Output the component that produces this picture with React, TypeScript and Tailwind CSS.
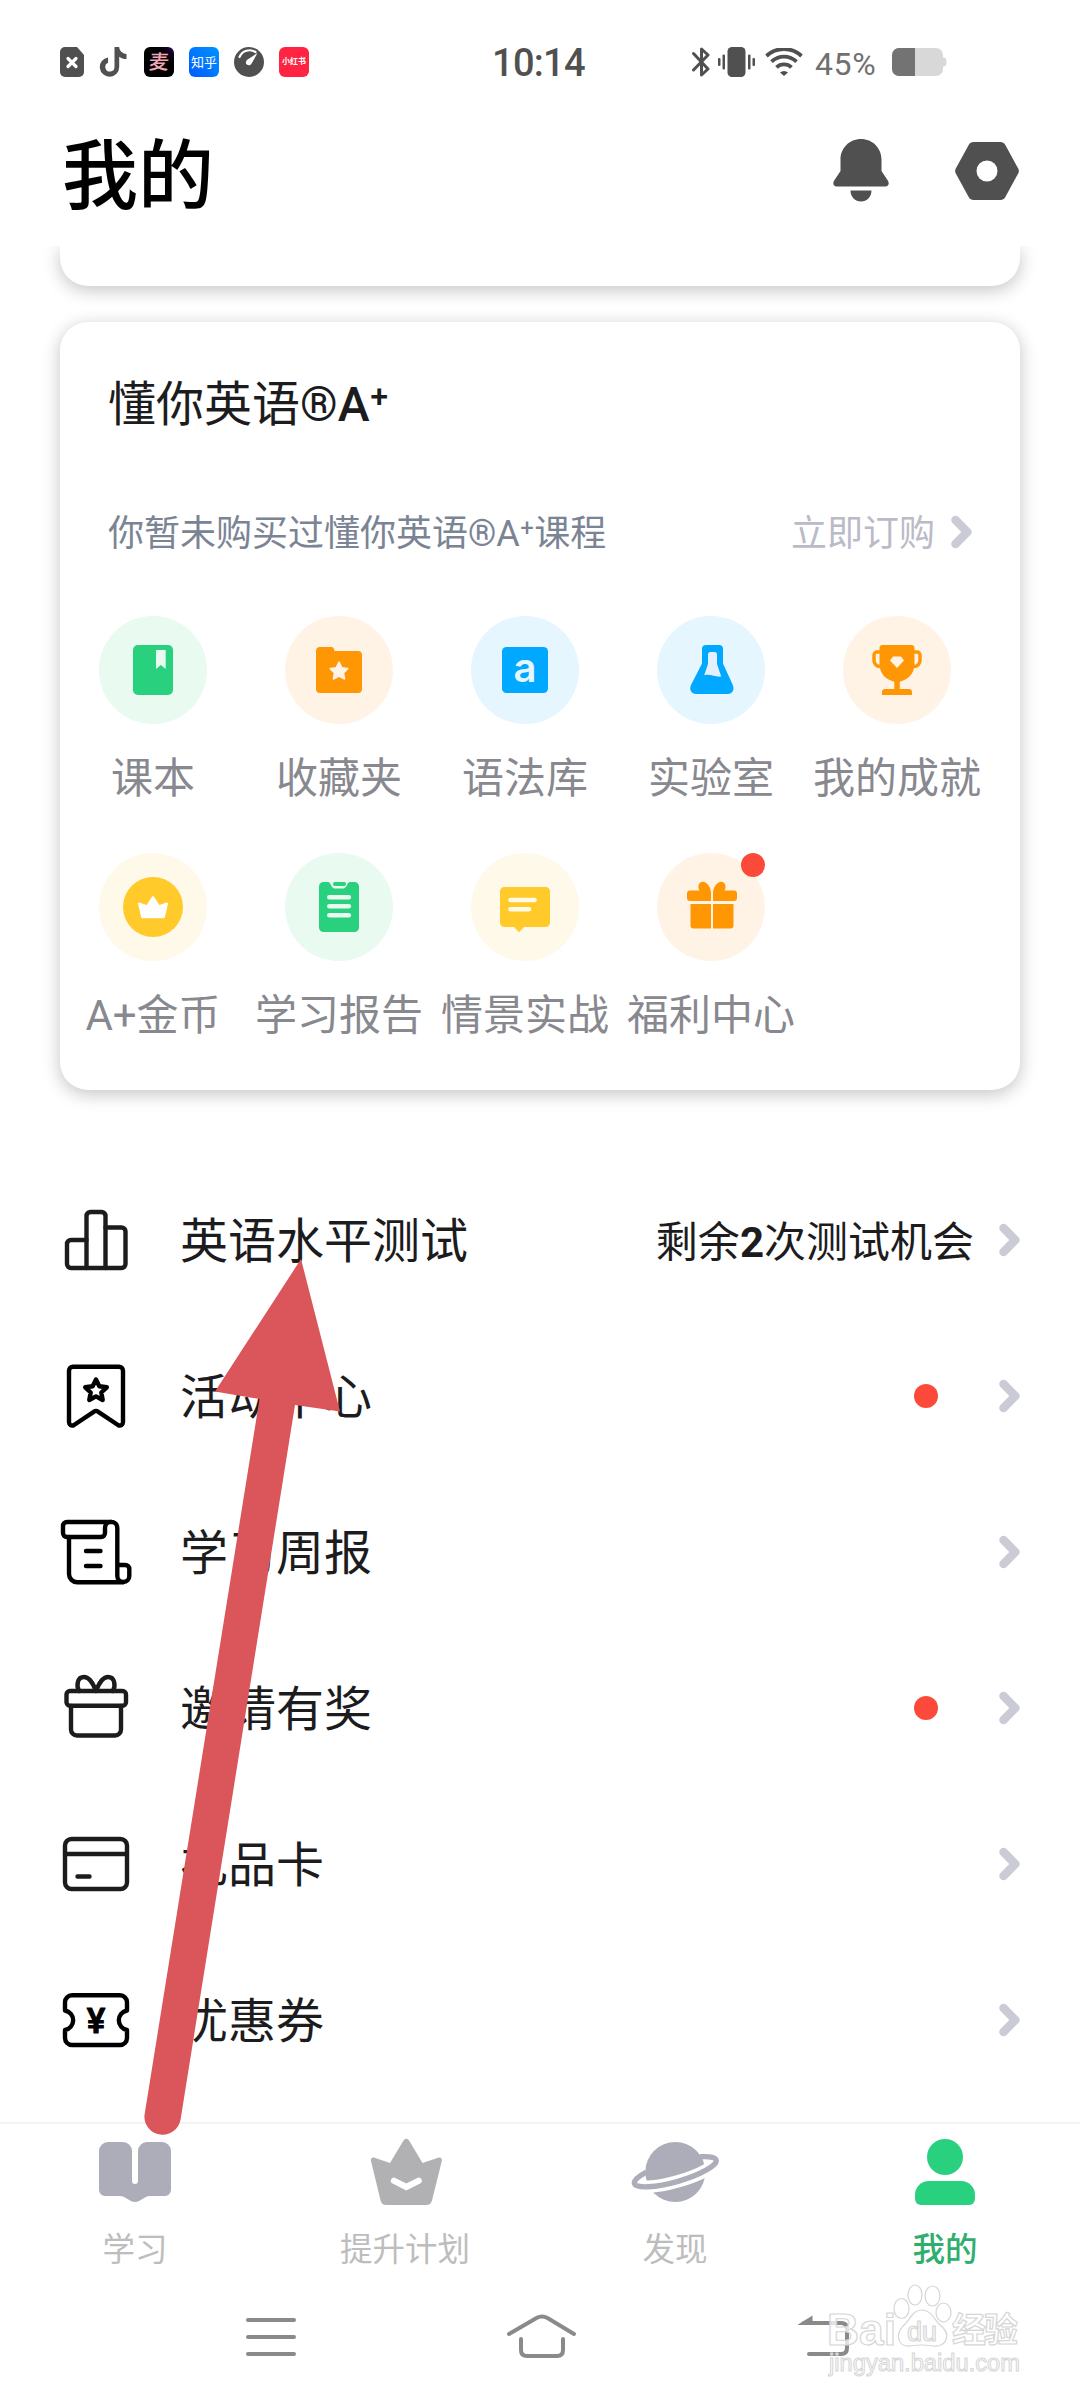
import type { ReactNode } from 'react';
import clsx from 'clsx';

const ARROW_COLOR = '#da565b';

/* ---------- Status bar ---------- */

const StatusBar = () => (
  <div className="h-[124px] shrink-0 flex items-center pl-[60px] text-[#505050]">
    <div className="flex items-center w-[432px] gap-[15px]">
      <svg width="24" height="30" viewBox="0 0 24 30">
        <path d="M5 0h12l7 8v17a5 5 0 0 1-5 5H5a5 5 0 0 1-5-5V5a5 5 0 0 1 5-5z" fill="#505050" />
        <path d="M8 11.5l8 8M16 11.5l-8 8" stroke="#fff" strokeWidth="3.2" strokeLinecap="round" />
      </svg>
      <svg width="30" height="30" viewBox="0 0 30 30">
        <path d="M15.5 0h4.6c.5 3.8 3 6.6 7.4 7v5c-2.800 0-5.200-.8-7.300-2.300V20a9.700 9.700 0 1 1-11.200-9.600v5.300a4.600 4.600 0 1 0 6.500 4.200z" fill="#505050" />
      </svg>
      <div className="w-[30px] h-[30px] rounded-[6px] bg-linear-to-bl from-[#2b0a4d] to-40% to-black flex items-center justify-center overflow-hidden">
        <span className="text-[20px] leading-none font-medium text-[#f0a6b4] -skew-x-6">麦</span>
      </div>
      <div className="w-[30px] h-[30px] rounded-[6px] bg-linear-to-tr from-[#0058ff] to-[#0094ff] flex items-center justify-center">
        <span className="text-[13px] leading-none text-white">知乎</span>
      </div>
      <svg width="30" height="30" viewBox="0 0 30 30">
        <circle cx="15" cy="15" r="15" fill="#505050" />
        <path d="M5.5 10A11 11 0 0 1 21.5 5" stroke="#fff" strokeWidth="2.2" fill="none" strokeLinecap="round" />
        <path d="M23.5 6L13.3 12.8a3 3 0 1 0 4.2 4z" fill="#fff" />
      </svg>
      <div className="w-[30px] h-[30px] rounded-[6px] bg-[#ff2442] flex items-center justify-center">
        <span className="text-[8px] leading-none font-bold text-white whitespace-nowrap">小红书</span>
      </div>
    </div>

    <div className="w-[199px] text-[38px] leading-none font-medium tracking-[-0.7px] pt-[2px]">10:14</div>

    <svg width="20" height="30" viewBox="0 0 20 30" fill="none" stroke="#505050" strokeWidth="3" strokeLinejoin="round" strokeLinecap="round">
      <path d="M2.5 6.5L17 22l-6.500 6V2L17 8 2.5 23" />
    </svg>
    <svg className="ml-[7px]" width="37" height="30" viewBox="0 0 37 30" fill="#505050">
      <rect x="9.5" width="18" height="30" rx="4.5" />
      <rect x="0" y="11" width="2.5" height="8" rx="1" />
      <rect x="4.5" y="7.5" width="2.5" height="15" rx="1" />
      <rect x="30" y="7.5" width="2.5" height="15" rx="1" />
      <rect x="34.5" y="11" width="2.5" height="8" rx="1" />
    </svg>
    <svg className="ml-[10px]" width="38" height="28" viewBox="0 0 38 28" fill="none" stroke="#505050" strokeWidth="3.8">
      <path d="M1.5 8a25.500 25.500 0 0 1 35 0" />
      <path d="M6.5 13.700a18 18 0 0 1 25 0" />
      <path d="M11.5 19.300a11 11 0 0 1 15 0" />
      <path d="M15 24.500a6 6 0 0 1 8 0L19 28z" fill="#505050" stroke="none" />
    </svg>
    <span className="ml-[12px] w-[77px] text-[32px] leading-none tracking-[0.6px] text-[#707070] pt-[3px]">45%</span>
    <svg width="55" height="28" viewBox="0 0 55 28">
      <path d="M7 0h37a7 7 0 0 1 7 7v2.500c2.500 0 3.500 1 3.500 4.500s-1 4.500-3.500 4.500V21a7 7 0 0 1-7 7H7a7 7 0 0 1-7-7V7a7 7 0 0 1 7-7z" fill="#d8d8d8" />
      <path d="M7 0h16v28H7a7 7 0 0 1-7-7V7a7 7 0 0 1 7-7z" fill="#737373" />
    </svg>
  </div>
);

const Header = () => (
  <header className="h-[122px] shrink-0 pl-[62px] pr-[60px] pb-[28px] flex items-center">
    <h1 className="flex-1 text-[76px] leading-none font-medium text-black pt-[11px]">我的</h1>
    <svg width="56" height="64" viewBox="0 0 56 64" fill="#505050">
      <path d="M28 0c11.500 0 20.500 9 20.500 20.500V32l6.300 9.500c2 3 .5 6-2.300 6h-49c-2.800 0-4.300-3-2.300-6L7.500 32V20.500C7.500 9 16.500 0 28 0z" />
      <path d="M17.500 51.500h21c0 6.500-4.700 11-10.500 11s-10.500-4.500-10.500-11z" />
    </svg>
    <svg className="ml-[65px]" width="66" height="60" viewBox="0 0 66 60">
      <path d="M19.500 1h27c2 0 3.700 1 4.700 2.700l13 23.800c.9 1.600.9 3.400 0 5l-13 23.800c-1 1.700-2.700 2.700-4.700 2.700h-27c-2 0-3.700-1-4.700-2.700l-13-23.800c-.9-1.600-.9-3.400 0-5l13-23.800C15.800 2 17.500 1 19.500 1z" fill="#505050" />
      <circle cx="33" cy="30" r="10.500" fill="#fff" />
    </svg>
  </header>
);

/* ---------- Course card ---------- */

interface Feature {
  label: string;
  bg: string;
  icon: ReactNode;
  badge?: boolean;
}

const FEATURES: Feature[] = [
  {
    label: '课本',
    bg: 'bg-[#e9faf1]',
    icon: (
      <>
        <rect x="34" y="29" width="40" height="50" rx="5" fill="#29d17f" />
        <path d="M57 34h9.700v19l-4.850-4L57 53z" fill="#e9faf1" />
      </>
    ),
  },
  {
    label: '收藏夹',
    bg: 'bg-[#fff3e5]',
    icon: (
      <>
        <path d="M35 31h11.500q2 0 2.600 2.300l.4 1.700H73a4 4 0 0 1 4 4v34a4 4 0 0 1-4 4H35a4 4 0 0 1-4-4V35a4 4 0 0 1 4-4z" fill="#ff9704" />
        <path d="M54 46.500l2.600 5.400 5.900.8-4.300 4.100 1.100 5.900-5.300-2.900-5.300 2.900 1.100-5.900-4.300-4.100 5.900-.8z" fill="#fff3e5" stroke="#fff3e5" strokeWidth="2" strokeLinejoin="round" />
      </>
    ),
  },
  {
    label: '语法库',
    bg: 'bg-[#e5f6ff]',
    icon: (
      <>
        <rect x="31" y="31" width="46" height="46" rx="4.500" fill="#00a9ff" />
        <text x="54" y="65.500" textAnchor="middle" fill="#e5f6ff" className="font-['Inter'] text-[40px] font-semibold">a</text>
      </>
    ),
  },
  {
    label: '实验室',
    bg: 'bg-[#e5f6ff]',
    icon: (
      <>
        <path d="M49 29h13a4 4 0 0 1 4 4v14.500l9.800 21.500c2 4.500-.3 9-5 9H39c-4.700 0-7-4.500-5-9L45 47.500V33a4 4 0 0 1 4-4z" fill="#00a9ff" />
        <path d="M53.500 36h4a2.500 2.500 0 0 1 2.500 2.500V48l4.200 12.500c-6 1-10.500-3-17-1.300L51 48v-9.500a2.500 2.500 0 0 1 2.500-2.500z" fill="#e5f0ff" />
      </>
    ),
  },
  {
    label: '我的成就',
    bg: 'bg-[#fff3e5]',
    icon: (
      <>
        <path d="M37 36h-3a3 3 0 0 0-3 3v5.500a6 6 0 0 0 6 6h2M71 36h3a3 3 0 0 1 3 3v5.500a6 6 0 0 1-6 6h-2" fill="none" stroke="#ff9704" strokeWidth="3.5" />
        <path d="M39.500 29h29a3 3 0 0 1 3 3v16c0 10-7 16-14.700 17.700V73H66a3 3 0 0 1 3 3v3H39v-3a3 3 0 0 1 3-3h9.300v-7.300C43.500 64 36.500 58 36.500 48V32a3 3 0 0 1 3-3z" fill="#ff9704" />
        <path d="M50 40.500h8l3 4-7 7.500-7-7.500z" fill="#fff3e5" />
      </>
    ),
  },
  {
    label: 'A+金币',
    bg: 'bg-[#fff9e9]',
    icon: (
      <>
        <circle cx="54" cy="54" r="30" fill="#ffca2a" />
        <path d="M54 44l6 9.200 8-2.700-3.200 13.700H43.200L40 50.500l8 2.700z" fill="#fff" stroke="#fff" strokeWidth="2" strokeLinejoin="round" />
      </>
    ),
  },
  {
    label: '学习报告',
    bg: 'bg-[#e9faf1]',
    icon: (
      <>
        <path d="M38.500 29H43c3 0 3 6.500 7 6.500h8c4 0 4-6.500 7-6.500h4.500a4.500 4.500 0 0 1 4.500 4.500v41a4.500 4.500 0 0 1-4.500 4.500h-31a4.500 4.500 0 0 1-4.500-4.500v-41a4.500 4.500 0 0 1 4.500-4.500z" fill="#29d17f" />
        <rect x="48" y="29" width="13" height="4" rx="2" fill="#29d17f" />
        <path d="M44.300 44.300h19.500M44.300 53.300h19.500M44.300 62.300h19.500" stroke="#e9faf1" strokeWidth="4.6" strokeLinecap="round" />
      </>
    ),
  },
  {
    label: '情景实战',
    bg: 'bg-[#fff9e9]',
    icon: (
      <>
        <path d="M33.500 34h41a4.500 4.500 0 0 1 4.500 4.500v31a4.500 4.500 0 0 1-4.500 4.500H53l-5 5.300-5-5.300h-9.500a4.500 4.500 0 0 1-4.500-4.500v-31a4.500 4.500 0 0 1 4.500-4.500z" fill="#ffca2a" />
        <path d="M39.500 47h24M39.500 56.300h18.500" stroke="#fff9e9" strokeWidth="4.6" strokeLinecap="round" />
      </>
    ),
  },
  {
    label: '福利中心',
    bg: 'bg-[#fff3e5]',
    badge: true,
    icon: (
      <>
        <path d="M54 48H33a3 3 0 0 1-3-3v-4.500a3 3 0 0 1 3-3h9.500c-3-5 .5-9.500 4-8.700 4 1 7.500 6 7.500 11zM56 48h21a3 3 0 0 0 3-3v-4.500a3 3 0 0 0-3-3h-9.500c3-5-.5-9.500-4-8.700-4 1-7.500 6-7.500 11z" fill="#ff9704" />
        <path d="M33.500 51H54v24.500H36.500a3 3 0 0 1-3-3zM56 51h20.500v21.500a3 3 0 0 1-3 3H56z" fill="#ff9704" />
      </>
    ),
  },
];

const Chevron = () => (
  <svg width="21" height="34" viewBox="0 0 21 34" fill="none" stroke="#cbcbd6" strokeWidth="8.5" strokeLinecap="round" strokeLinejoin="round">
    <path d="M4.500 5L16.300 17 4.500 29" />
  </svg>
);

const FeatureItem = ({ feature }: { feature: Feature }) => (
  <div className="flex flex-col items-center h-[237px]">
    <div className={clsx('relative w-[108px] h-[108px] rounded-full', feature.bg)}>
      <svg width="108" height="108" viewBox="0 0 108 108">{feature.icon}</svg>
      {feature.badge && <span className="absolute top-0 right-0 w-6 h-6 rounded-full bg-[#fb4a3a]" />}
    </div>
    <span className="mt-[34px] text-[42px] leading-[42px] text-[#88888f] whitespace-nowrap">{feature.label}</span>
  </div>
);

const CourseCard = () => (
  <section className="h-[768px] mt-[36px] mx-[60px] shrink-0 bg-white rounded-[28px] shadow-[0_4px_18px_rgba(0,0,0,0.24)]">
    <h2 className="pt-[59px] pl-[48px] text-[48px] leading-[48px] text-[#1c1c1e]">
      懂你英语<span className="font-medium">®A⁺</span>
    </h2>
    <div className="mt-[79px] h-[48px] pl-[48px] pr-[48px] flex items-center text-[36px] leading-[48px]">
      <span className="flex-1 text-[#7b8494] pt-[4px]">你暂未购买过懂你英语®A⁺课程</span>
      <span className="text-[#bbbbc8] mr-[16px] pt-[4px]">立即订购</span>
      <Chevron />
    </div>
    <div className="mt-[60px] w-[930px] grid grid-cols-5">
      {FEATURES.map(f => <FeatureItem key={f.label} feature={f} />)}
    </div>
  </section>
);

/* ---------- Menu list ---------- */

interface MenuEntry {
  label: string;
  icon: ReactNode;
  color: string;
  extra?: ReactNode;
}

const Dot = () => <span className="w-6 h-6 rounded-full bg-[#fb4a3a] mr-[61px]" />;

const MENU: MenuEntry[] = [
  {
    label: '英语水平测试',
    color: '#1c1c1e',
    extra: <span className="mr-[25px] pt-[6px] text-[42px] leading-none">剩余<b>2</b>次测试机会</span>,
    icon: (
      <>
        <path d="M26.500 64V12a4 4 0 0 1 4-4h11a4 4 0 0 1 4 4v52" />
        <path d="M26.500 36H11a4 4 0 0 0-4 4v20a4 4 0 0 0 4 4h50.500a4 4 0 0 0 4-4V27.500a4 4 0 0 0-4-4h-16" />
      </>
    ),
  },
  {
    label: '活动中心',
    color: '#000',
    extra: <Dot />,
    icon: (
      <>
        <path d="M13 6.700h46a4 4 0 0 1 4 4V62c0 3-2.500 4.500-5 3L38.300 51.800a4 4 0 0 0-4.600 0L14 65c-2.500 1.500-5 0-5-3V10.700a4 4 0 0 1 4-4z" />
        <path d="M36 19.500l3.300 6.800 7.500 1-5.500 5.200 1.400 7.500-6.700-3.600-6.700 3.600 1.400-7.500-5.500-5.200 7.500-1z" />
      </>
    ),
  },
  {
    label: '学习周报',
    color: '#000',
    icon: (
      <>
        <path d="M51 6H7a4 4 0 0 0-4 4v7a4 4 0 0 0 4 4h34a4 4 0 0 0 4-4v-5a6 6 0 0 1 12.300 0v48a6 6 0 0 0 12 0v-7a4 4 0 0 0-4-4h-8" />
        <path d="M9 21v37a8.300 8.300 0 0 0 8.300 8.300H63M26 35h14.500M26 50h14.500" />
      </>
    ),
  },
  {
    label: '邀请有奖',
    color: '#1c1c1e',
    extra: <Dot />,
    icon: (
      <>
        <rect x="6.500" y="19" width="59.500" height="14.700" rx="3.5" />
        <path d="M11 34v23.500a6 6 0 0 0 6 6h38a6 6 0 0 0 6-6V34" />
        <path d="M19 19c-3-6-1.500-14 5-14 5.500 0 9 6 12 14 3-8 6.500-14 12-14 6.500 0 8 8 5 14" />
      </>
    ),
  },
  {
    label: '礼品卡',
    color: '#1c1c1e',
    icon: (
      <>
        <rect x="5" y="11" width="62" height="50" rx="6.5" />
        <path d="M5 26h62M17.500 48.500h12" />
      </>
    ),
  },
  {
    label: '优惠券',
    color: '#000',
    icon: (
      <>
        <path d="M12 11.300h48a7 7 0 0 1 7 7v8.200a9.900 9.900 0 0 0 0 19.500v8a7 7 0 0 1-7 7H12a7 7 0 0 1-7-7v-8a9.900 9.900 0 0 0 0-19.500v-8.200a7 7 0 0 1 7-7z" />
        <text x="36" y="48.500" textAnchor="middle" fill="#000" strokeWidth="1" className="font-['Roboto'] text-[35px] font-medium">¥</text>
      </>
    ),
  },
];

const MenuRow = ({ entry }: { entry: MenuEntry }) => (
  <div className="h-[156px] px-[60px] flex items-center text-[#1c1c1e]">
    <svg width="72" height="72" viewBox="0 0 72 72" fill="none" stroke={entry.color} strokeWidth="4.4" strokeLinecap="round" strokeLinejoin="round">
      {entry.icon}
    </svg>
    <span className="ml-[48px] flex-1 pt-[4px] text-[48px] leading-none">{entry.label}</span>
    {entry.extra}
    <Chevron />
  </div>
);

/* ---------- Bottom tabs ---------- */

const TABS = [
  {
    label: '学习',
    textClass: 'text-[#bdbdbd]',
    icon: (
      <path d="M18 6h15a9 9 0 0 1 9 9v30a3 3 0 0 0 6 0V15a9 9 0 0 1 9-9h15a9 9 0 0 1 9 9v39a6 6 0 0 1-6 6H60c-6 0-9 6-15 6s-9-6-15-6H15a6 6 0 0 1-6-6V15a9 9 0 0 1 9-9z" fill="#adadba" />
    ),
  },
  {
    label: '提升计划',
    textClass: 'text-[#bdbdbd]',
    icon: (
      <>
        <path d="M43.500 4.500a3.200 3.200 0 0 1 5.600 0L62.500 27l15.700-5.300c2.300-.8 4.200.8 3.600 3.300L72 64.500c-.8 3-2.800 4.500-5.500 4.500H26c-2.700 0-4.700-1.500-5.400-4.500L11 25c-.6-2.500 1.200-4.100 3.500-3.300L30 27z" fill="#b1b1b3" />
        <path d="M34 44.700L46.300 51l12.400-6.300" fill="none" stroke="#fff" strokeWidth="6.2" strokeLinecap="round" />
      </>
    ),
  },
  {
    label: '发现',
    textClass: 'text-[#bdbdbd]',
    icon: (
      <>
        <circle cx="45.300" cy="36" r="30" fill="#adadba" />
        <g transform="translate(45.300 35.700) rotate(-16)" fill="none">
          <path d="M-42.500 0A42.500 10 0 0 0 42.500 0" stroke="#fff" strokeWidth="12.5" />
          <path d="M-28 -7.500C-37 -5.500 -42.500 -3 -42.500 0A42.500 10 0 0 0 42.500 0C42.500 -3 37 -5.500 28 -7.500" stroke="#adadba" strokeWidth="5.4" />
        </g>
      </>
    ),
  },
  {
    label: '我的',
    textClass: 'text-[#2fae6e] font-medium',
    icon: (
      <>
        <circle cx="45" cy="21" r="18" fill="#29d17f" />
        <path d="M29 45h32a14 14 0 0 1 14 14v4a6 6 0 0 1-6 6H21a6 6 0 0 1-6-6v-4a14 14 0 0 1 14-14z" fill="#29d17f" />
      </>
    ),
  },
];

const TabBar = () => (
  <nav className="h-[162px] shrink-0 border-t-2 border-[#f3f3f3] pt-[12px] grid grid-cols-4">
    {TABS.map(tab => (
      <div key={tab.label} className="flex flex-col items-center">
        <svg width="90" height="72" viewBox="0 0 90 72">{tab.icon}</svg>
        <span className={clsx('mt-[26px] text-[32.5px] leading-[33px]', tab.textClass)}>{tab.label}</span>
      </div>
    ))}
  </nav>
);

const SystemNav = () => (
  <div className="h-[106px] pl-[244px] flex items-center">
    <svg width="54" height="48" viewBox="0 0 54 48" fill="none" stroke="#8a8a8a" strokeWidth="4" strokeLinecap="round">
      <path d="M4 7h46M4 24h46M4 41h46" />
    </svg>
    <svg className="ml-[207px]" width="72" height="48" viewBox="0 0 72 48" fill="none" stroke="#8a8a8a" strokeWidth="4" strokeLinecap="round">
      <path d="M4 21L31.500 5q5.500-3 11 0L69 21M16 26v11q0 6 6 6h30q6 0 6-6V26" />
    </svg>
    <svg className="ml-[219px]" width="56" height="48" viewBox="0 0 56 48" fill="none" stroke="#8a8a8a" strokeWidth="4" strokeLinecap="round">
      <path d="M8 10h37q6 0 6 6v19q0 6-6 6H13" />
      <path d="M2 11.500L16.500 2.500V12H2z" fill="#8a8a8a" stroke="none" />
    </svg>
  </div>
);

/* ---------- Overlays ---------- */

const PointerArrow = () => (
  <svg className="absolute left-[140px] top-[1255px]" width="204" height="885" viewBox="140 1255 204 885">
    <path d="M301 1259L340 1411.500 295 1405 180.500 2120a18.200 18.200 0 0 1-36-5L259.500 1399 215 1391.500z" fill={ARROW_COLOR} />
  </svg>
);

const Watermark = () => (
  <svg
    className="absolute left-[820px] top-[2280px]"
    width="210"
    height="104"
    viewBox="820 2280 210 104"
    fill="#fff"
    fillOpacity="0.75"
    stroke="#d6d6d6"
    strokeWidth="1.2"
  >
    <text x="827" y="2345" textLength="69" lengthAdjust="spacingAndGlyphs" className="font-['Liberation_Sans'] text-[44px] font-bold">Bai</text>
    <ellipse cx="901.500" cy="2308.500" rx="7.500" ry="10" />
    <ellipse cx="915" cy="2295" rx="7" ry="10" />
    <ellipse cx="932.500" cy="2296" rx="7.500" ry="10" />
    <ellipse cx="943.500" cy="2312.500" rx="7.500" ry="9.500" />
    <path d="M922 2310c9 0 12 9 17 14 5 4 9 8 7.500 14-1.500 7-8 8.500-13 8-4-.5-8-1-11.500-1s-7.500.5-11.500 1c-5 .5-11-1-12-8-1-6 3-11 7.500-15 5-5 7-13 16-13z" />
    <text x="922" y="2341" textAnchor="middle" className="font-['Liberation_Sans'] text-[27px]">du</text>
    <text x="952" y="2342" textLength="66" className="text-[34px] font-bold">经验</text>
    <text x="829" y="2371" textLength="191" lengthAdjust="spacingAndGlyphs" strokeWidth="1" className="font-['Liberation_Sans'] text-[23px]">jingyan.baidu.com</text>
  </svg>
);

export default function App() {
  return (
    <div className="relative w-[1080px] h-[2400px] overflow-hidden bg-white flex flex-col font-['Roboto','Noto_Sans_CJK_SC',sans-serif]">
      <StatusBar />
      <Header />
      <main className="h-[1876px] shrink-0 overflow-hidden flex flex-col">
        <div className="h-[40px] mx-[60px] shrink-0 rounded-b-[28px] bg-white shadow-[0_4px_18px_rgba(0,0,0,0.24)]" />
        <CourseCard />
        <div className="mt-[72px]">
          {MENU.map(entry => <MenuRow key={entry.label} entry={entry} />)}
        </div>
      </main>
      <TabBar />
      <SystemNav />
      <PointerArrow />
      <Watermark />
    </div>
  );
}
